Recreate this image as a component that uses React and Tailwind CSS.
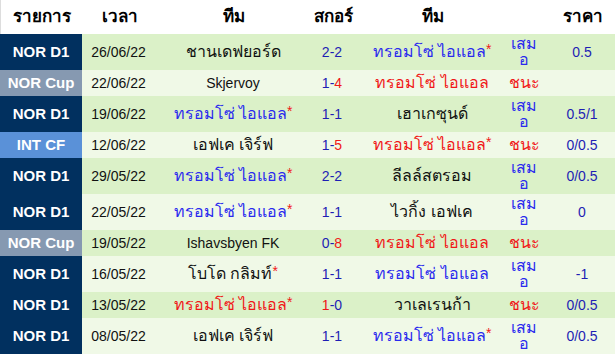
const TEAM = 'ทรอมโซ่ ไอแอล'

const rows = [
  { league: 'NOR D1', date: '26/06/22', home: { name: 'ชานเดฟยอร์ด' }, score: ['2', '2'], away: { name: TEAM, tone: 'blue', star: true }, result: 'draw', price: '0.5' },
  { league: 'NOR Cup', date: '22/06/22', home: { name: 'Skjervoy' }, score: ['1', '4', 'away'], away: { name: TEAM, tone: 'red' }, result: 'win', price: '' },
  { league: 'NOR D1', date: '19/06/22', home: { name: TEAM, tone: 'blue', star: true }, score: ['1', '1'], away: { name: 'เฮาเกซุนด์' }, result: 'draw', price: '0.5/1' },
  { league: 'INT CF', date: '12/06/22', home: { name: 'เอฟเค เจิร์ฟ' }, score: ['1', '5', 'away'], away: { name: TEAM, tone: 'red', star: true }, result: 'win', price: '0/0.5' },
  { league: 'NOR D1', date: '29/05/22', home: { name: TEAM, tone: 'blue', star: true }, score: ['2', '2'], away: { name: 'ลีลล์สตรอม' }, result: 'draw', price: '0/0.5' },
  { league: 'NOR D1', date: '22/05/22', home: { name: TEAM, tone: 'blue', star: true }, score: ['1', '1'], away: { name: 'ไวกิ้ง เอฟเค' }, result: 'draw', price: '0' },
  { league: 'NOR Cup', date: '19/05/22', home: { name: 'Ishavsbyen FK' }, score: ['0', '8', 'away'], away: { name: TEAM, tone: 'red' }, result: 'win', price: '' },
  { league: 'NOR D1', date: '16/05/22', home: { name: 'โบโด กลิมท์', star: true }, score: ['1', '1'], away: { name: TEAM, tone: 'blue' }, result: 'draw', price: '-1' },
  { league: 'NOR D1', date: '13/05/22', home: { name: TEAM, tone: 'red', star: true }, score: ['1', '0', 'home'], away: { name: 'วาเลเรนก้า' }, result: 'win', price: '0/0.5' },
  { league: 'NOR D1', date: '08/05/22', home: { name: 'เอฟเค เจิร์ฟ' }, score: ['1', '1'], away: { name: TEAM, tone: 'blue', star: true }, result: 'draw', price: '0/0.5' },
]

const leagueBg = {
  'NOR D1': 'bg-[#01305f]',
  'NOR Cup': 'bg-[#8699b1]',
  'INT CF': 'bg-[#5a91d8]',
}

const cols = 'grid grid-cols-[82px_73px_156px_42px_158px_26px_78px]'

const isThai = (s) => /[\u0E00-\u0E7F]/.test(s)

function Team({ team }) {
  const color =
    team.tone === 'blue' ? 'text-[#2a2aee]' : team.tone === 'red' ? 'text-[#f01818]' : 'text-[#111]'
  return (
    <div className="flex items-center justify-center whitespace-nowrap">
      <span className={`${color} ${isThai(team.name) ? 'text-[16px]' : 'text-[14px]'}`}>
        {team.name}
        {team.star && <span className="relative -top-[3px] text-[14px] text-[#f01818]">*</span>}
      </span>
    </div>
  )
}

function Score({ score }) {
  const [h, a, win] = score
  return (
    <div className="flex items-center justify-center text-[#1e1eb4]">
      <span className={win === 'home' ? 'text-[#f01818]' : ''}>{h}</span>
      <span>-</span>
      <span className={win === 'away' ? 'text-[#f01818]' : ''}>{a}</span>
    </div>
  )
}

function Result({ result }) {
  if (result === 'win') {
    return (
      <div className="flex items-center justify-center whitespace-nowrap text-[16px] text-[#f01818]">ชนะ</div>
    )
  }
  return (
    <div className="flex flex-col items-center justify-center whitespace-nowrap py-[2px] text-[16px] leading-[16px] text-[#2a2aee]">
      <span>เสม</span>
      <span>อ</span>
    </div>
  )
}

export default function App() {
  return (
    <div className="w-[615px] bg-white font-['Liberation_Sans',Arial,sans-serif] text-[14px]">
      {/* header */}
      <div className={`${cols} h-[34px] items-center border-l border-[#dddddd] font-bold text-[17px] text-black`}>
        <div className="text-center">รายการ</div>
        <div className="text-center">เวลา</div>
        <div className="text-center">ทีม</div>
        <div className="text-center">สกอร์</div>
        <div className="text-center">ทีม</div>
        <div />
        <div className="pl-3 text-center">ราคา</div>
      </div>

      {rows.map((r, i) => (
        <div
          key={i}
          className={`${cols} min-h-[26px] ${i % 2 === 0 ? 'bg-[#dbf1c8]' : 'bg-[#f0f9e7]'}`}
        >
          <div className={`flex items-center justify-center font-bold text-[15px] text-white ${leagueBg[r.league]}`}>
            {r.league}
          </div>
          <div className="flex items-center justify-center text-[#111]">{r.date}</div>
          <Team team={r.home} />
          <Score score={r.score} />
          <Team team={r.away} />
          <Result result={r.result} />
          <div className="flex items-center justify-center pl-3 text-[#1e1eb4]">{r.price}</div>
        </div>
      ))}
    </div>
  )
}
